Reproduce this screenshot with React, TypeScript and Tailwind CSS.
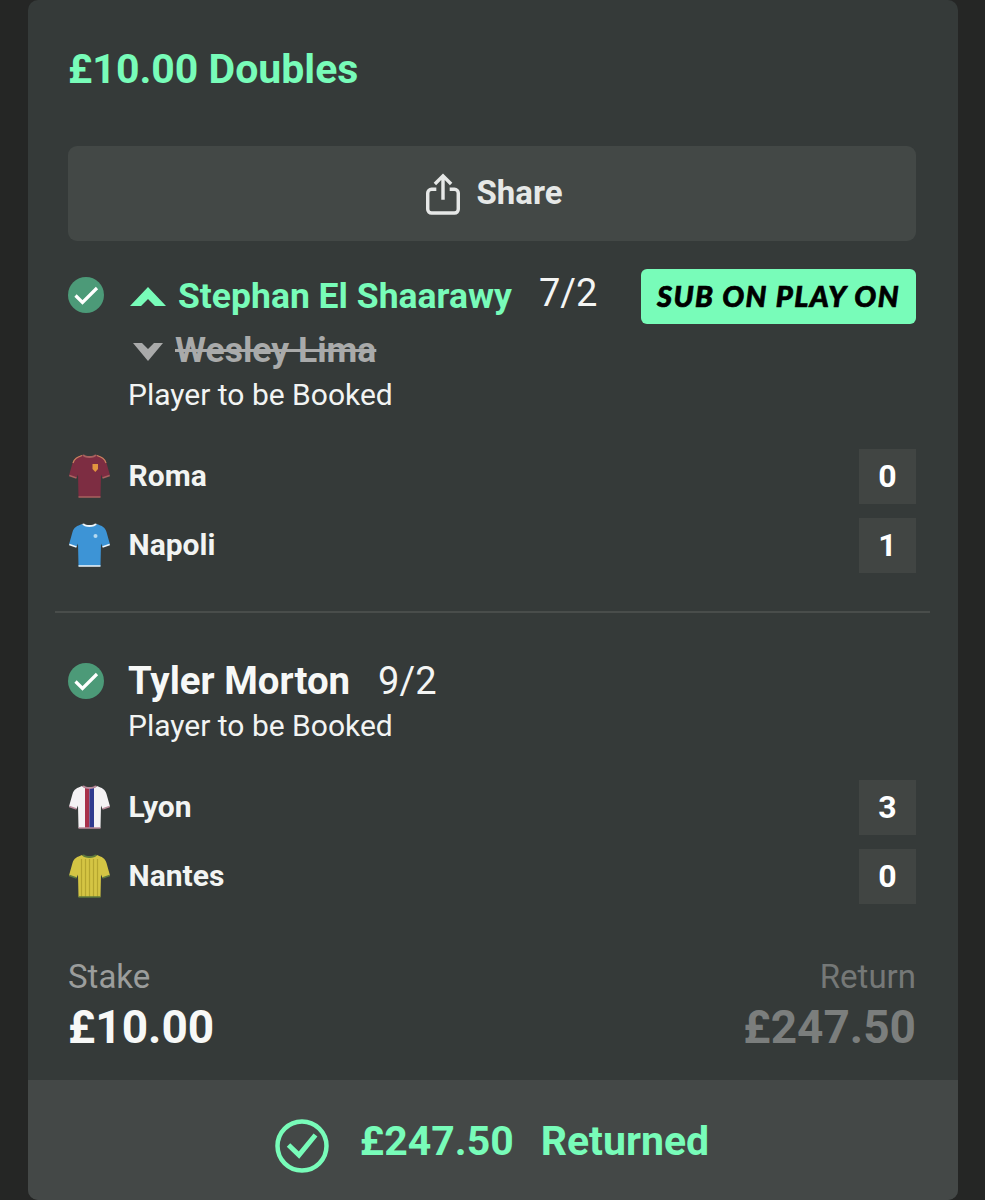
import type { ReactNode } from "react";

const Check = () => (
  <svg width="36" height="36" viewBox="0 0 36 36" className="shrink-0">
    <circle cx="18" cy="18" r="18" fill="#4c9a78" />
    <path d="M7.500 18.500l7 7L29 11" fill="none" stroke="#fff" strokeWidth="3.200" />
  </svg>
);

type KitProps = { body: string; trim: string; children?: ReactNode };

// Football shirt silhouette; children paint stripes and badges over the body.
const SHIRT =
  "M13 1C8 3 5 4 3.500 9L0 21.500l7.500 2.500L9 20.500l.5 22.500h22l.5-22.500 1.500 3.500 7.500-2.500L37.500 9C36 4 33 3 28 1c-2 3-13 3-15 0z";

const Kit = ({ body, trim, children }: KitProps) => (
  <svg width="41" height="46" viewBox="0 0 41 46" className="shrink-0">
    <path d={SHIRT} fill={body} />
    {children}
    <path d="M13 1c2 4 13 4 15 0l-2-.5c-2 2-9 2-11 0z" fill={trim} />
    <path d="M.3 21.500l7.200 2.500M40.700 21.500l-7.200 2.500M9.500 43h22" stroke={trim} strokeWidth="1.500" fill="none" />
  </svg>
);

const RomaKit = () => (
  <Kit body="#7d2d42" trim="#a9605f">
    <path d="M13 1.500C8 3.500 5.500 4.500 4 9" stroke="#c9845f" strokeWidth="1.200" fill="none" />
    <path d="M28 1.500c5 2 7.500 3 9 7.500" stroke="#c9845f" strokeWidth="1.200" fill="none" />
    <path d="M23.500 10H29v5l-2.700 3-2.800-3z" fill="#e3953f" />
  </Kit>
);

const NapoliKit = () => (
  <Kit body="#3d94d6" trim="#eef6fb">
    <circle cx="26.500" cy="13" r="2" fill="#b5d9f0" />
  </Kit>
);

const LyonKit = () => (
  <Kit body="#f4f2f4" trim="#b98a9b">
    <rect x="16" y="3" width="4.500" height="40" fill="#a8304a" />
    <rect x="20.500" y="3" width="4.500" height="40" fill="#2f3a8f" />
  </Kit>
);

const NantesKit = () => (
  <Kit body="#d4c544" trim="#5e7a3c">
    <path d="M12.500 5v38M16.500 5v38M20.500 5v38M24.500 5v38M28.500 5v38" stroke="#b5a62f" strokeWidth="1.200" fill="none" />
  </Kit>
);

const TeamRow = ({ kit, name, score }: { kit: ReactNode; name: string; score: number }) => (
  <div className="flex items-center h-[55px]">
    <div className="w-[42px] flex justify-center">{kit}</div>
    <span className="ml-[18.500px] text-[30px] font-bold text-[#f2f4f3] leading-none flex-1 -mt-[1px]">{name}</span>
    <span className="w-[57px] h-[55px] bg-[#414543] flex items-center justify-center text-[32px] font-bold text-white -mt-[1px]">
      {score}
    </span>
  </div>
);

export default function App() {
  return (
    <div className="w-[985px] h-[1200px] overflow-hidden bg-[#252625] px-[28px] font-['Roboto',sans-serif]">
      <div className="w-[930px] h-[1200px] bg-[#353a39] rounded-[10px] overflow-hidden flex flex-col">
        <div className="pl-[40px] pr-[42px] flex-1">
          <h1 className="pt-[45px] text-[41px] leading-[48px] font-bold text-[#78fcb9]">£10.00 Doubles</h1>

          <button className="mt-[53px] w-full h-[95px] rounded-[9px] bg-[#434846] flex items-center justify-center gap-[15px] text-[33px] font-bold text-[#e6e8e7]">
            <svg width="36" height="42" viewBox="0 0 36 44" fill="none" stroke="#e6e8e7" strokeWidth="3.600" className="ml-[4px]">
              <path d="M18 28V3M9.500 11.500L18 3l8.500 8.500" />
              <path d="M11 17H6a4 4 0 0 0-4 4v17a4 4 0 0 0 4 4h24a4 4 0 0 0 4-4V21a4 4 0 0 0-4-4h-5" />
            </svg>
            <span className="-mt-[1px]">Share</span>
          </button>

          <div className="mt-[28px] flex items-start">
            <div className="pt-[8px]">
              <Check />
            </div>
            <div className="ml-[24px] flex-1">
              <div className="flex items-center h-[54px]">
                <svg width="36" height="20" viewBox="0 0 36 20" className="ml-[2px] shrink-0 mt-[2px]">
                  <path d="M18 0l18 19H25l-7-7-7 7H0z" fill="#78fcb9" />
                </svg>
                <span className="ml-[12px] text-[35.500px] font-bold text-[#78fcb9] leading-none mt-[2px]">Stephan El Shaarawy</span>
                <span className="ml-[27px] text-[38px] text-[#f4f5f4] leading-none -mt-[6px]">7/2</span>
                <span className="ml-auto w-[275px] h-[55px] rounded-[6px] bg-[#78fcb9] flex items-center justify-center font-['Lato',sans-serif] italic font-black text-[29px] text-black tracking-[1.500px] [-webkit-text-stroke:0.7px_black]">
                  SUB ON PLAY ON
                </span>
              </div>
              <div className="mt-[5px] flex items-center h-[45px]">
                <svg width="30" height="18" viewBox="0 0 30 18" className="ml-[5px] shrink-0 mt-[2px]">
                  <path d="M0 0l9 0 6 6 6-6 9 0-15 18z" fill="#a9aaaa" />
                </svg>
                <span className="ml-[12px] text-[35.500px] font-bold text-[#a9aaaa] line-through leading-none">Wesley Lima</span>
              </div>
              <div className="text-[30px] leading-[44px] text-[#f2f4f3]">Player to be Booked</div>
            </div>
          </div>

          <div className="mt-[32px] flex flex-col gap-[14px]">
            <TeamRow kit={<RomaKit />} name="Roma" score={0} />
            <TeamRow kit={<NapoliKit />} name="Napoli" score={1} />
          </div>

          <div className="mt-[38px] -ml-[13px] -mr-[14px] h-[2px] bg-[#494d4b]" />

          <div className="mt-[41px] flex items-start">
            <div className="pt-[9px]">
              <Check />
            </div>
            <div className="ml-[24px] flex-1">
              <div className="flex items-center h-[54px]">
                <span className="text-[38.400px] font-bold text-[#f7f8f7] leading-none">Tyler Morton</span>
                <span className="ml-[28px] text-[38px] text-[#f4f5f4] leading-none">9/2</span>
              </div>
              <div className="-mt-[4px] text-[30px] leading-[44px] text-[#f2f4f3]">Player to be Booked</div>
            </div>
          </div>

          <div className="mt-[32px] flex flex-col gap-[14px]">
            <TeamRow kit={<LyonKit />} name="Lyon" score={3} />
            <TeamRow kit={<NantesKit />} name="Nantes" score={0} />
          </div>

          <div className="mt-[55px] flex justify-between">
            <div>
              <div className="text-[33px] leading-[36px] text-[#9b9d9c]">Stake</div>
              <div className="mt-[4px] text-[46px] leading-[56px] font-bold text-[#f7f8f7]">£10.00</div>
            </div>
            <div className="text-right">
              <div className="text-[33px] leading-[36px] text-[#757877]">Return</div>
              <div className="mt-[4px] text-[46px] leading-[56px] font-bold text-[#7b7e7d]">£247.50</div>
            </div>
          </div>
        </div>

        <div className="shrink-0 h-[120px] bg-[#444847] flex items-start justify-center pt-[38px] pr-[2px] text-[41px] leading-[46px] font-bold text-[#78fcb9]">
          <svg width="54" height="54" viewBox="0 0 54 54" className="mt-[1px] mr-[31px]">
            <circle cx="27" cy="27" r="24.500" fill="none" stroke="#78fcb9" strokeWidth="4.500" />
            <path d="M13.500 26l10.500 10L40.500 16" fill="none" stroke="#78fcb9" strokeWidth="5" />
          </svg>
          <span>£247.50</span>
          <span className="ml-[27px]">Returned</span>
        </div>
      </div>
    </div>
  );
}
